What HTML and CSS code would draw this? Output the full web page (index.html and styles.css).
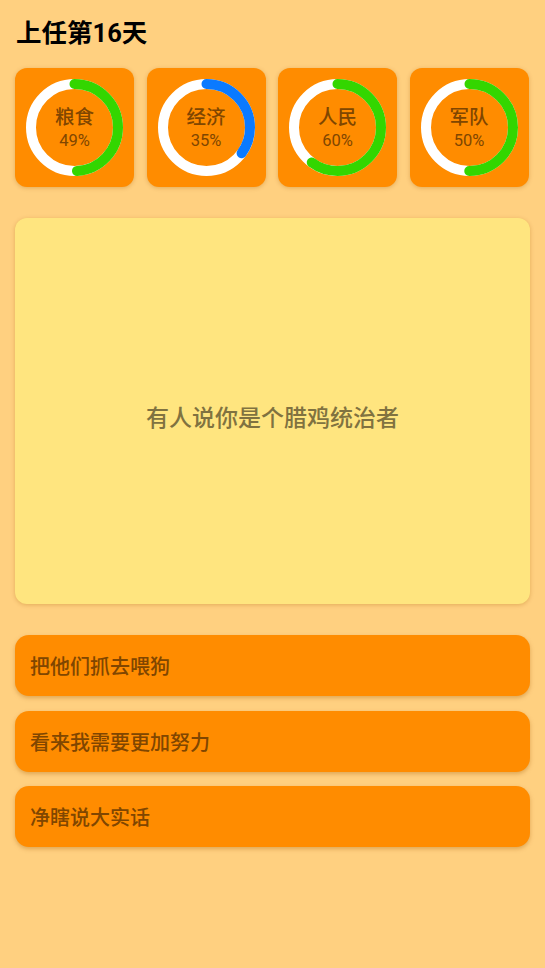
FILE: index.html
```html
<!DOCTYPE html>
<html lang="zh-CN">
<head>
<meta charset="utf-8">
<title>上任第16天</title>
<link rel="stylesheet" href="styles.css">
</head>
<body>
<div class="page">
  <h1 class="title">上任第16天</h1>
  <div class="stats">
    <div class="stat">
      <svg class="ring" viewBox="0 0 97 97">
        <circle class="track" cx="48.5" cy="48.5" r="43.5"/>
        <circle class="bar green" cx="48.5" cy="48.5" r="43.5" stroke-dasharray="133.9 400"/>
      </svg>
      <div class="label"><span class="name">粮食</span><span class="pct">49%</span></div>
    </div>
    <div class="stat">
      <svg class="ring" viewBox="0 0 97 97">
        <circle class="track" cx="48.5" cy="48.5" r="43.5"/>
        <circle class="bar blue" cx="48.5" cy="48.5" r="43.5" stroke-dasharray="95.7 400"/>
      </svg>
      <div class="label"><span class="name">经济</span><span class="pct">35%</span></div>
    </div>
    <div class="stat">
      <svg class="ring" viewBox="0 0 97 97">
        <circle class="track" cx="48.5" cy="48.5" r="43.5"/>
        <circle class="bar green" cx="48.5" cy="48.5" r="43.5" stroke-dasharray="164 400"/>
      </svg>
      <div class="label"><span class="name">人民</span><span class="pct">60%</span></div>
    </div>
    <div class="stat">
      <svg class="ring" viewBox="0 0 97 97">
        <circle class="track" cx="48.5" cy="48.5" r="43.5"/>
        <circle class="bar green" cx="48.5" cy="48.5" r="43.5" stroke-dasharray="136.7 400"/>
      </svg>
      <div class="label"><span class="name">军队</span><span class="pct">50%</span></div>
    </div>
  </div>
  <div class="event">有人说你是个腊鸡统治者</div>
  <div class="choices">
    <button class="choice">把他们抓去喂狗</button>
    <button class="choice">看来我需要更加努力</button>
    <button class="choice">净瞎说大实话</button>
  </div>
</div>
</body>
</html>
```

FILE: styles.css
```css
html, body {
  margin: 0;
  padding: 0;
  background: #FFD080;
}
body {
  font-family: Roboto, "Noto Sans CJK SC", sans-serif;
  width: 545px;
  min-height: 968px;
}
.page {
  padding: 17px 15px 0 16px;
}
.title {
  margin: 0 0 19px 0;
  font-size: 25.5px;
  line-height: 32px;
  font-weight: 700;
  color: #000;
}
.stats {
  display: grid;
  grid-template-columns: repeat(4, 119px);
  column-gap: 12.5px;
  margin-left: -1px;
}
.stat {
  position: relative;
  height: 119px;
  background: #FF8C00;
  border-radius: 12px;
  box-shadow: 0 1px 4px rgba(160, 90, 0, 0.3);
  display: flex;
  align-items: center;
  justify-content: center;
}
.ring {
  position: absolute;
  left: 11px;
  top: 11px;
  width: 97px;
  height: 97px;
  transform: rotate(-90deg);
}
.track {
  fill: none;
  stroke: #FFFFFF;
  stroke-width: 10;
}
.bar {
  fill: none;
  stroke-width: 10;
  stroke-linecap: round;
}
.green { stroke: #33D600; }
.blue { stroke: #0A7AFF; }
.label {
  position: relative;
  display: flex;
  flex-direction: column;
  align-items: center;
  color: #804600;
  margin-top: 2px;
}
.name {
  font-size: 19.5px;
  line-height: 25px;
  font-weight: 500;
}
.pct {
  font-size: 16.5px;
  line-height: 22px;
  font-weight: 400;
}
.event {
  margin: 31px 0 0 -1px;
  height: 386px;
  box-sizing: border-box;
  padding-top: 10px;
  background: #FFE57F;
  border-radius: 12px;
  box-shadow: 0 1px 4px rgba(160, 90, 0, 0.3);
  display: flex;
  align-items: center;
  justify-content: center;
  font-size: 23px;
  font-weight: 500;
  color: #807240;
}
.choices {
  margin: 31px 0 0 -1px;
  display: flex;
  flex-direction: column;
  gap: 14.5px;
}
.choice {
  height: 61px;
  border: none;
  border-radius: 14px;
  background: #FF8C00;
  box-shadow: 0 2px 4px rgba(160, 90, 0, 0.35);
  text-align: left;
  padding: 0 15px;
  font-family: Roboto, "Noto Sans CJK SC", sans-serif;
  font-size: 20px;
  font-weight: 500;
  color: #804600;
}
```
